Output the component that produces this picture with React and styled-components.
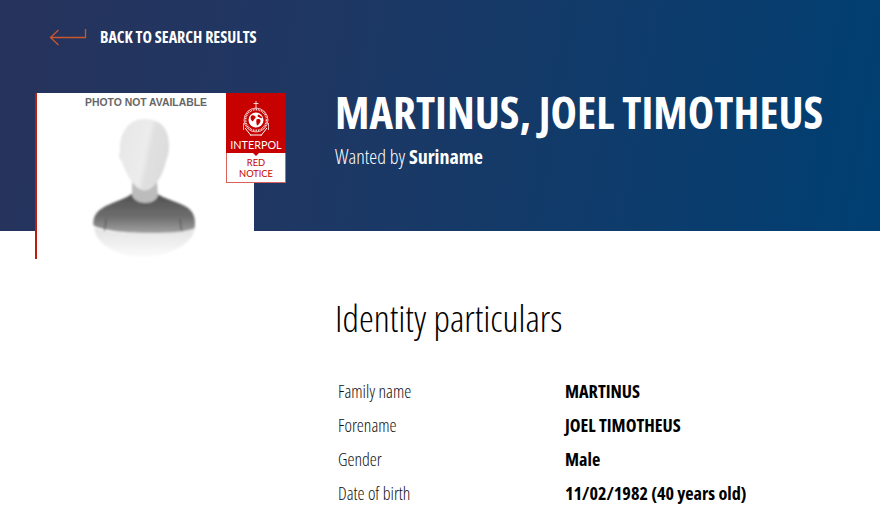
import React from "react";
import styled, { createGlobalStyle } from "styled-components";

const GlobalStyle = createGlobalStyle`
  html, body {
    margin: 0;
    padding: 0;
    height: 100%;
    overflow: hidden;
    background: #fff;
    font-family: "Open Sans", "Liberation Sans", sans-serif;
  }
`;

const rows = [
  ["Family name", "MARTINUS"],
  ["Forename", "JOEL TIMOTHEUS"],
  ["Gender", "Male"],
  ["Date of birth", "11/02/1982 (40 years old)"],
];

const PersonPicture = () => (
  <PersonSvg viewBox="0 0 120 142" width="120" height="142">
    <defs>
      <linearGradient id="head" x1="0" y1="0" x2="1" y2="0.3">
        <stop offset="0" stopColor="#e6e6e6" />
        <stop offset="0.6" stopColor="#ececec" />
        <stop offset="0.7" stopColor="#e0e0e0" />
        <stop offset="1" stopColor="#dddddd" />
      </linearGradient>
      <linearGradient id="shirt" x1="0" y1="0" x2="0" y2="1">
        <stop offset="0" stopColor="#505050" />
        <stop offset="0.6" stopColor="#6f6f6f" />
        <stop offset="1" stopColor="#a2a2a2" />
      </linearGradient>
      <linearGradient id="bottom" x1="0" y1="0" x2="0" y2="1">
        <stop offset="0" stopColor="#e2e2e2" />
        <stop offset="1" stopColor="#fbfbfb" />
      </linearGradient>
      <filter id="soft" x="-5%" y="-5%" width="110%" height="110%">
        <feGaussianBlur stdDeviation="0.9" />
      </filter>
    </defs>
    <g filter="url(#soft)">
      <path d="M9 110 C24 118 96 118 110 110 C110 126 84 140 58 140 C32 140 9 126 9 110Z" fill="url(#bottom)" />
      <path d="M8 108 C7 97 14 91 24 87 C33 83 41 81 47 76 L72 76 C79 81 88 83 97 87 C107 91 112 98 110 111 C96 118 24 118 8 108Z" fill="url(#shirt)" />
      <path d="M47 62 L72 62 L73 78 C71 88 50 88 47 78Z" fill="#bcbcbc" />
      <path d="M60 1 C74 1 83 9 84 24 C85 33 83 39 81 44 C79 55 70 73 60 73 C50 73 41 57 37 44 C34 42 33 37 35 33 C34 14 44 1 60 1Z" fill="url(#head)" />
      <path d="M21 102 L19 114 M95 102 L97 114" stroke="#3d3d3d" strokeWidth="0.8" fill="none" />
    </g>
  </PersonSvg>
);

const InterpolEmblem = () => (
  <svg viewBox="0 0 28 36" width="28" height="36" fill="none" stroke="#fff">
    <path d="M14 0 V8 M11.500 2.500 H16.500" strokeWidth="0.8" />
    <circle cx="14" cy="19" r="12" strokeWidth="0.7" />
    <circle cx="14" cy="19" r="10.500" strokeWidth="1.800" strokeDasharray="0.8 0.9" />
    <circle cx="14" cy="19" r="7.500" fill="#fff" stroke="none" />
    <path d="M9.500 14.500 C12 13.500 14 15 13.500 17 C12.500 18 11.500 18.500 11 20.500 C9 19.500 7.500 17 9.500 14.500Z M14.500 18.500 C17 17.500 19 18.500 18.500 20.500 C17.500 22.500 16 24.500 15 24.500 C14.500 23 14 21 14.500 18.500Z M16 13.500 C18 14 20 15.500 20.500 17 C19 17.500 17 16.500 15.500 15.500Z" fill="#c70000" stroke="none" />
    <path d="M3 27 L9 34.500 M25 27 L19 34.500 M8 34 H20" strokeWidth="1" />
    <path d="M1.500 22 V29 M26.500 22 V29" strokeWidth="0.7" />
  </svg>
);

const App = () => {
  return (
    <Page>
      <GlobalStyle />
      <Hero>
        <BackLink>
          <svg width="38" height="18" viewBox="0 0 38 18" fill="none" stroke="#c9562c" strokeWidth="1.3">
            <path d="M36.500 1 V9.500 H1.500 M9.500 2 L1.500 9.500 L9.500 17" />
          </svg>
          <span>BACK TO SEARCH RESULTS</span>
        </BackLink>
        <HeroBody>
          <Photo>
            <PhotoCaption>PHOTO NOT AVAILABLE</PhotoCaption>
            <PersonPicture />
            <Badge>
              <BadgeTop>
                <InterpolEmblem />
                <BadgeName>INTERPOL</BadgeName>
              </BadgeTop>
              <BadgeBottom>RED<br />NOTICE</BadgeBottom>
            </Badge>
          </Photo>
          <Heading>
            <Name>MARTINUS, JOEL TIMOTHEUS</Name>
            <WantedBy>Wanted by <strong>Suriname</strong></WantedBy>
          </Heading>
        </HeroBody>
      </Hero>
      <Main>
        <SectionTitle>Identity particulars</SectionTitle>
        <Details>
          {rows.map(([label, value]) => (
            <Row key={label}>
              <Label>{label}</Label>
              <Value>{value}</Value>
            </Row>
          ))}
        </Details>
      </Main>
    </Page>
  );
};

export default App;

const Page = styled.div`
  width: 880px;
  height: 505px;
  overflow: hidden;
  font-stretch: 75%;
`;
const Hero = styled.header`
  height: 231px;
  box-sizing: border-box;
  padding: 26px 0 0 35px;
  background: linear-gradient(100deg, #26335c 0%, #1f3763 35%, #003f72 100%);
`;
const BackLink = styled.a`
  display: flex;
  align-items: center;
  gap: 13px;
  height: 22px;
  margin-left: 14px;
  color: #fff;
  font-size: 16px;
  font-weight: 700;
`;
const HeroBody = styled.div`
  display: flex;
  align-items: flex-start;
  margin-top: 45px;
`;
const Photo = styled.div`
  position: relative;
  flex: none;
  width: 219px;
  height: 166px;
  box-sizing: border-box;
  background: #fff;
  border-left: 2px solid #c01a0c;
  display: flex;
  flex-direction: column;
  align-items: center;
`;
const PersonSvg = styled.svg`
  display: block;
  margin: 8px 0 0 -2px;
`;
const PhotoCaption = styled.div`
  margin-top: 3px;
  height: 14px;
  line-height: 14px;
  font-family: "Liberation Sans", sans-serif;
  font-stretch: normal;
  font-size: 10.400px;
  font-weight: 700;
  color: #666;
  margin-left: 5px;
  padding-right: 4px;
`;
const Badge = styled.div`
  position: absolute;
  top: 0;
  left: 189px;
  width: 60px;
  height: 90px;
  display: flex;
  flex-direction: column;
`;
const BadgeTop = styled.div`
  height: 60px;
  box-sizing: border-box;
  padding-top: 8px;
  background: #c70000;
  display: flex;
  flex-direction: column;
  align-items: center;
  position: relative;
  &::after {
    content: "";
    position: absolute;
    left: 27px;
    bottom: -3px;
    border: 3px solid transparent;
    border-top-color: #c70000;
    border-bottom: 0;
  }
`;
const BadgeName = styled.div`
  font-family: "Lato", sans-serif;
  font-stretch: normal;
  font-size: 10.800px;
  font-weight: 400;
  line-height: 13px;
  margin-top: 1px;
  color: #fff;
`;
const BadgeBottom = styled.div`
  height: 30px;
  box-sizing: border-box;
  padding-top: 4px;
  background: #fff;
  border: 1px solid #d9605c;
  border-top: 0;
  text-align: center;
  font-family: "Lato", sans-serif;
  font-stretch: normal;
  font-size: 9.300px;
  line-height: 11.200px;
  color: #c70000;
`;
const Heading = styled.div`
  margin-left: 81px;
  color: #fff;
`;
const Name = styled.h1`
  margin: -11px 0 0;
  font-size: 44.700px;
  line-height: 60px;
  font-weight: 700;
  white-space: nowrap;
`;
const WantedBy = styled.p`
  margin: 0;
  font-size: 20px;
  line-height: 30px;
  font-weight: 300;
  strong {
    font-weight: 700;
  }
`;
const Main = styled.main`
  padding: 60px 0 0 335px;
`;
const SectionTitle = styled.h2`
  margin: 0;
  font-size: 37.500px;
  line-height: 54px;
  font-weight: 300;
  color: #000;
`;
const Details = styled.div`
  margin-top: 29px;
  display: flex;
  flex-direction: column;
`;
const Row = styled.div`
  display: grid;
  grid-template-columns: 227px 1fr;
  height: 34px;
  align-items: center;
  padding-left: 3px;
`;
const Label = styled.div`
  font-size: 17.800px;
  font-weight: 300;
  color: #111;
`;
const Value = styled.div`
  font-size: 18.200px;
  font-weight: 700;
  color: #000;
`;
